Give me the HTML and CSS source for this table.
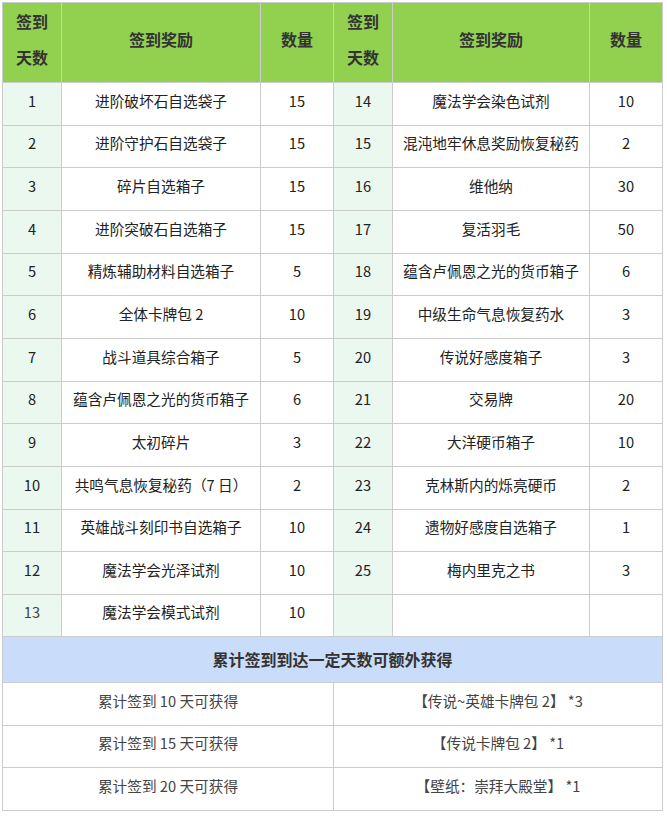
FILE: index.html
```html
<!DOCTYPE html>
<html lang="zh-CN">
<head>
<meta charset="utf-8">
<title>签到奖励</title>
<link rel="stylesheet" href="styles.css">
</head>
<body>
<div class="wrap">
<table class="sign">
  <colgroup>
    <col class="c-day"><col class="c-item"><col class="c-num">
    <col class="c-day"><col class="c-item2"><col class="c-num">
  </colgroup>
  <thead>
    <tr class="head">
      <th class="two">签到<br>天数</th><th>签到奖励</th><th>数量</th>
      <th class="two">签到<br>天数</th><th>签到奖励</th><th>数量</th>
    </tr>
  </thead>
  <tbody>
    <tr><td class="day">1</td><td>进阶破坏石自选袋子</td><td>15</td><td class="day">14</td><td>魔法学会染色试剂</td><td>10</td></tr>
    <tr><td class="day">2</td><td>进阶守护石自选袋子</td><td>15</td><td class="day">15</td><td>混沌地牢休息奖励恢复秘药</td><td>2</td></tr>
    <tr><td class="day">3</td><td>碎片自选箱子</td><td>15</td><td class="day">16</td><td>维他纳</td><td>30</td></tr>
    <tr><td class="day">4</td><td>进阶突破石自选箱子</td><td>15</td><td class="day">17</td><td>复活羽毛</td><td>50</td></tr>
    <tr><td class="day">5</td><td>精炼辅助材料自选箱子</td><td>5</td><td class="day">18</td><td>蕴含卢佩恩之光的货币箱子</td><td>6</td></tr>
    <tr><td class="day">6</td><td>全体卡牌包 2</td><td>10</td><td class="day">19</td><td>中级生命气息恢复药水</td><td>3</td></tr>
    <tr><td class="day">7</td><td>战斗道具综合箱子</td><td>5</td><td class="day">20</td><td>传说好感度箱子</td><td>3</td></tr>
    <tr><td class="day">8</td><td>蕴含卢佩恩之光的货币箱子</td><td>6</td><td class="day">21</td><td>交易牌</td><td>20</td></tr>
    <tr><td class="day">9</td><td>太初碎片</td><td>3</td><td class="day">22</td><td>大洋硬币箱子</td><td>10</td></tr>
    <tr><td class="day">10</td><td>共鸣气息恢复秘药（7 日）</td><td>2</td><td class="day">23</td><td>克林斯内的烁亮硬币</td><td>2</td></tr>
    <tr><td class="day">11</td><td>英雄战斗刻印书自选箱子</td><td>10</td><td class="day">24</td><td>遗物好感度自选箱子</td><td>1</td></tr>
    <tr><td class="day">12</td><td>魔法学会光泽试剂</td><td>10</td><td class="day">25</td><td>梅内里克之书</td><td>3</td></tr>
    <tr class="last"><td class="day dim">13</td><td>魔法学会模式试剂</td><td>10</td><td class="day"></td><td></td><td></td></tr>
    <tr class="band"><td colspan="6">累计签到到达一定天数可额外获得</td></tr>
    <tr class="extra"><td colspan="3">累计签到 10 天可获得</td><td colspan="3">【传说~英雄卡牌包 2】 *3</td></tr>
    <tr class="extra mid"><td colspan="3">累计签到 15 天可获得</td><td colspan="3">【传说卡牌包 2】 *1</td></tr>
    <tr class="extra"><td colspan="3">累计签到 20 天可获得</td><td colspan="3">【壁纸：崇拜大殿堂】 *1</td></tr>
  </tbody>
</table>
</div>
</body>
</html>
```

FILE: styles.css
```css
html, body {
  margin: 0;
  padding: 0;
  background: #ffffff;
}

.wrap {
  padding: 2px 0 0 2px;
}

.sign {
  width: 661px;
  table-layout: fixed;
  border-collapse: collapse;
  border: 1px solid #cccccc;
  font-family: "Microsoft YaHei", "Noto Sans CJK SC", "Noto Sans", sans-serif;
  font-size: 14.67px;
  color: #222222;
}

.c-day { width: 59px; }
.c-item { width: 199px; }
.c-item2 { width: 197px; }
.c-num { width: 73px; }

.sign th,
.sign td {
  border: 1px solid #cccccc;
  text-align: center;
  vertical-align: middle;
  padding: 0 0 6px 0;
  line-height: 20px;
}

.sign .head th {
  background: #92d050;
  height: 72px;
  font-size: 16px;
  font-weight: bold;
  color: #333333;
  padding-bottom: 7px;
}

.sign .head th.two {
  line-height: 36px;
}

.sign tbody td {
  height: 35.67px;
}

.sign tbody tr.last td {
  height: 35px;
}

.sign td.day {
  background: #ebf8ef;
}

.sign td.dim {
  color: #444444;
}

.sign tbody .band td {
  background: #c9dcfa;
  height: 45px;
  padding-bottom: 0;
  font-size: 16px;
  font-weight: bold;
  color: #333333;
}

.sign tbody .extra td {
  height: 36px;
  color: #444444;
}

.sign tbody .extra.mid td {
  height: 35px;
}
```
